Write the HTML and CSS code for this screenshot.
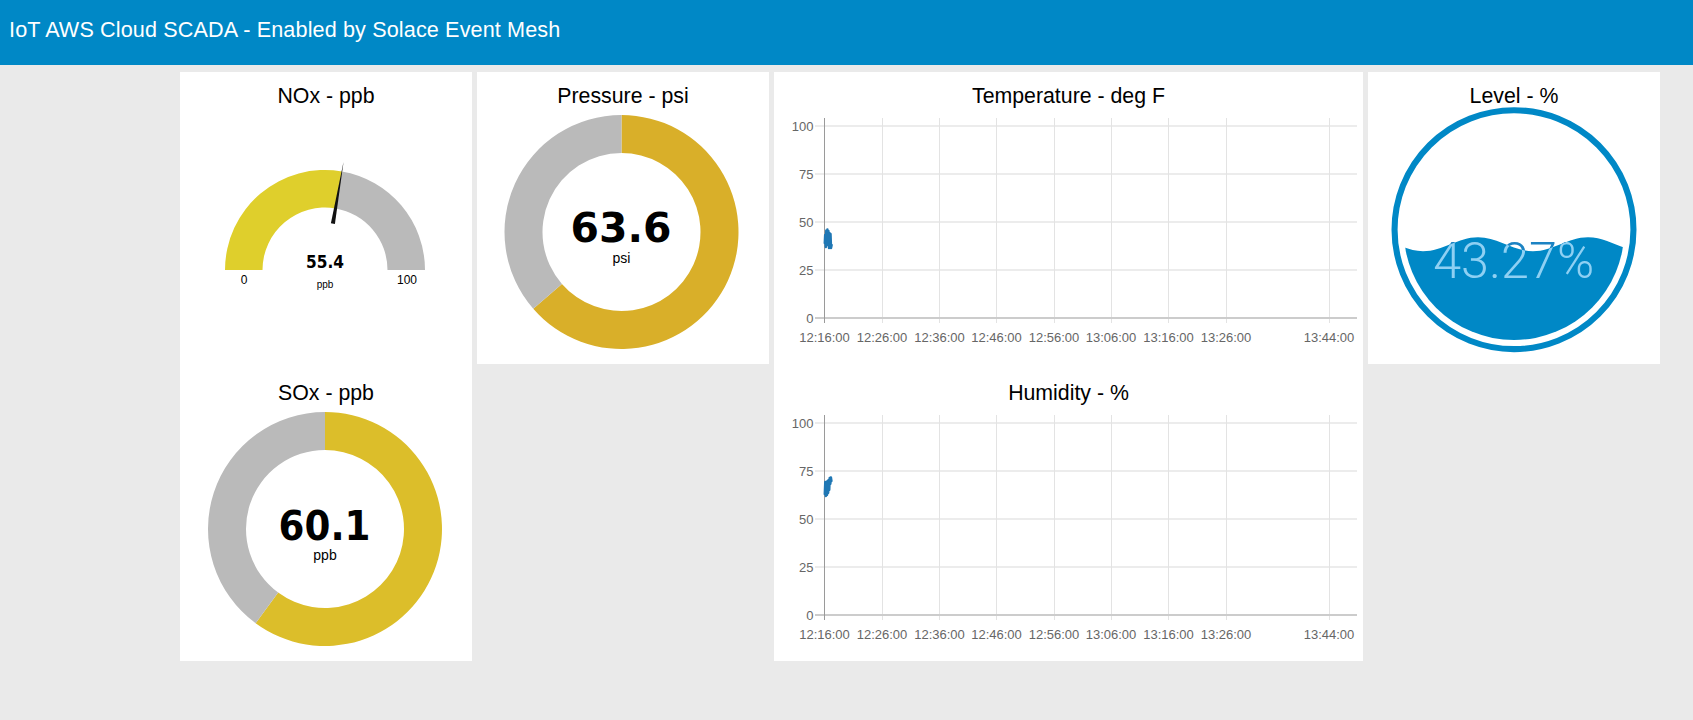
FILE: index.html
```html
<!DOCTYPE html>
<html lang="en">
<head>
<meta charset="utf-8">
<title>IoT AWS Cloud SCADA</title>
<link rel="stylesheet" href="styles.css">
</head>
<body>
<header class="topbar">IoT AWS Cloud SCADA - Enabled by Solace Event Mesh</header>
<main class="board">

  <section class="card card-tall">
    <div class="widget">
      <div class="widget-title">NOx - ppb</div>
      <svg class="widget-svg" width="292" height="255" viewBox="0 0 292 255">
        <path class="nox-fill" d="M45 161 A100 100 0 0 1 161.86 62.43 L155.54 99.39 A62.5 62.5 0 0 0 82.5 161 Z"/>
        <path class="rest" d="M161.86 62.43 A100 100 0 0 1 245 161 L207.5 161 A62.5 62.5 0 0 0 155.54 99.39 Z"/>
        <polygon class="needle" points="150.9,114.3 154.9,115.0 163.6,52.6"/>
        <text class="gauge-value" x="145" y="159" font-size="18" textLength="38" lengthAdjust="spacingAndGlyphs">55.4</text>
        <text class="gauge-unit-sm" x="145" y="179">ppb</text>
        <text class="gauge-minmax" x="64" y="175">0</text>
        <text class="gauge-minmax" x="227" y="175">100</text>
      </svg>
    </div>
    <div class="widget">
      <div class="widget-title">SOx - ppb</div>
      <svg class="widget-svg" width="292" height="255" viewBox="0 0 292 255">
        <path class="sox-fill" d="M145 6 A117 117 0 1 1 75.63 217.22 L98.16 186.62 A79 79 0 1 0 145 44 Z"/>
        <path class="rest" d="M75.63 217.22 A117 117 0 0 1 145 6 L145 44 A79 79 0 0 0 98.16 186.62 Z"/>
        <text class="gauge-value" x="144.5" y="134" font-size="41" textLength="92" lengthAdjust="spacingAndGlyphs">60.1</text>
        <text class="gauge-unit" x="145" y="154">ppb</text>
      </svg>
    </div>
  </section>

  <section class="card">
    <div class="widget">
      <div class="widget-title">Pressure - psi</div>
      <svg class="widget-svg" width="292" height="255" viewBox="0 0 292 255">
        <path class="psi-fill" d="M144.5 6 A117 117 0 1 1 56.26 199.83 L84.92 174.88 A79 79 0 1 0 144.5 44 Z"/>
        <path class="rest" d="M56.26 199.83 A117 117 0 0 1 144.5 6 L144.5 44 A79 79 0 0 0 84.92 174.88 Z"/>
        <text class="gauge-value" x="144" y="133" font-size="41" textLength="101" lengthAdjust="spacingAndGlyphs">63.6</text>
        <text class="gauge-unit" x="144.5" y="153.7">psi</text>
      </svg>
    </div>
  </section>

  <section class="card card-tall">
    <div class="widget">
      <div class="widget-title">Temperature - deg F</div>
      <svg class="widget-svg" width="589" height="255" viewBox="0 0 589 255">
        <g class="hgrid">
          <line x1="41" y1="17" x2="583" y2="17"/>
          <line x1="41" y1="65" x2="583" y2="65"/>
          <line x1="41" y1="113" x2="583" y2="113"/>
          <line x1="41" y1="161" x2="583" y2="161"/>
        </g>
        <g class="vgrid">
          <line x1="108.5" y1="9" x2="108.5" y2="214"/>
          <line x1="165.5" y1="9" x2="165.5" y2="214"/>
          <line x1="222.5" y1="9" x2="222.5" y2="214"/>
          <line x1="280.5" y1="9" x2="280.5" y2="214"/>
          <line x1="337.5" y1="9" x2="337.5" y2="214"/>
          <line x1="394.5" y1="9" x2="394.5" y2="214"/>
          <line x1="452.5" y1="9" x2="452.5" y2="214"/>
          <line x1="555.5" y1="9" x2="555.5" y2="214"/>
        </g>
        <line class="zero-line" x1="41" y1="209" x2="583" y2="209"/>
        <line class="y-axis" x1="50.5" y1="9" x2="50.5" y2="214"/>
        <g class="y-labels">
          <text x="39.5" y="21.5">100</text>
          <text x="39.5" y="69.5">75</text>
          <text x="39.5" y="117.5">50</text>
          <text x="39.5" y="165.5">25</text>
          <text x="39.5" y="213.5">0</text>
        </g>
        <g class="x-labels">
          <text x="50.5" y="232.5">12:16:00</text>
          <text x="108" y="232.5">12:26:00</text>
          <text x="165.5" y="232.5">12:36:00</text>
          <text x="222.5" y="232.5">12:46:00</text>
          <text x="280" y="232.5">12:56:00</text>
          <text x="337" y="232.5">13:06:00</text>
          <text x="394.5" y="232.5">13:16:00</text>
          <text x="452" y="232.5">13:26:00</text>
          <text x="555" y="232.5">13:44:00</text>
        </g>
        <polyline class="series" points="50.8,134 51.2,126 51.8,138 52.3,121.5 52.9,136 53.4,120.5 54,131 54.4,122 55,139 55.4,124 56,135 56.5,125 57,139 57.6,136"/>
      </svg>
    </div>
    <div class="widget">
      <div class="widget-title">Humidity - %</div>
      <svg class="widget-svg" width="589" height="255" viewBox="0 0 589 255">
        <g class="hgrid">
          <line x1="41" y1="17" x2="583" y2="17"/>
          <line x1="41" y1="65" x2="583" y2="65"/>
          <line x1="41" y1="113" x2="583" y2="113"/>
          <line x1="41" y1="161" x2="583" y2="161"/>
        </g>
        <g class="vgrid">
          <line x1="108.5" y1="9" x2="108.5" y2="214"/>
          <line x1="165.5" y1="9" x2="165.5" y2="214"/>
          <line x1="222.5" y1="9" x2="222.5" y2="214"/>
          <line x1="280.5" y1="9" x2="280.5" y2="214"/>
          <line x1="337.5" y1="9" x2="337.5" y2="214"/>
          <line x1="394.5" y1="9" x2="394.5" y2="214"/>
          <line x1="452.5" y1="9" x2="452.5" y2="214"/>
          <line x1="555.5" y1="9" x2="555.5" y2="214"/>
        </g>
        <line class="zero-line" x1="41" y1="209" x2="583" y2="209"/>
        <line class="y-axis" x1="50.5" y1="9" x2="50.5" y2="214"/>
        <g class="y-labels">
          <text x="39.5" y="21.5">100</text>
          <text x="39.5" y="69.5">75</text>
          <text x="39.5" y="117.5">50</text>
          <text x="39.5" y="165.5">25</text>
          <text x="39.5" y="213.5">0</text>
        </g>
        <g class="x-labels">
          <text x="50.5" y="232.5">12:16:00</text>
          <text x="108" y="232.5">12:26:00</text>
          <text x="165.5" y="232.5">12:36:00</text>
          <text x="222.5" y="232.5">12:46:00</text>
          <text x="280" y="232.5">12:56:00</text>
          <text x="337" y="232.5">13:06:00</text>
          <text x="394.5" y="232.5">13:16:00</text>
          <text x="452" y="232.5">13:26:00</text>
          <text x="555" y="232.5">13:44:00</text>
        </g>
        <polyline class="series" points="50.8,88 51.3,76 51.9,90 52.4,78 53,89 53.5,75 54.1,87 54.6,74 55.2,84 55.7,72 56.3,78 56.9,71.5 57.4,75"/>
      </svg>
    </div>
  </section>

  <section class="card">
    <div class="widget">
      <div class="widget-title">Level - %</div>
      <svg class="widget-svg" width="292" height="255" viewBox="0 0 292 255">
        <defs>
          <clipPath id="fillCircle"><circle cx="146" cy="120.7" r="110.3"/></clipPath>
          <clipPath id="waveArea"><path d="M0 128.2 C20.04 128.2 34.96 142.2 55 142.2 S89.96 128.2 110 128.2 S144.96 142.2 165 142.2 S199.96 128.2 220 128.2 S254.96 142.2 275 142.2 L275 240 L0 240 Z"/></clipPath>
        </defs>
        <circle class="level-ring" cx="146" cy="120.7" r="119.45"/>
        <text class="level-text" x="145.7" y="169.3" textLength="161" lengthAdjust="spacingAndGlyphs">43.27%</text>
        <g clip-path="url(#fillCircle)">
          <path class="level-wave" d="M0 128.2 C20.04 128.2 34.96 142.2 55 142.2 S89.96 128.2 110 128.2 S144.96 142.2 165 142.2 S199.96 128.2 220 128.2 S254.96 142.2 275 142.2 L275 240 L0 240 Z"/>
          <text class="level-text level-text-in" clip-path="url(#waveArea)" x="145.7" y="169.3" textLength="161" lengthAdjust="spacingAndGlyphs">43.27%</text>
        </g>
      </svg>
    </div>
  </section>

</main>
</body>
</html>
```

FILE: styles.css
```css
html, body {
  margin: 0;
  padding: 0;
}

body {
  background: #eaeaea;
  font-family: "Liberation Sans", Arial, sans-serif;
  color: #000;
  height: 720px;
  overflow: hidden;
}

.topbar {
  box-sizing: border-box;
  height: 65px;
  padding: 18px 0 0 9px;
  background: #0088c6;
  color: #ffffff;
  font-size: 21.6px;
  line-height: 24px;
  letter-spacing: 0.13px;
}

.board {
  display: grid;
  grid-template-columns: 292px 292px 589px 292px;
  grid-template-rows: 292px 292px;
  gap: 5px;
  padding: 7px 0 0 180px;
}

.card {
  background: #ffffff;
}

.card-tall {
  grid-row: span 2;
  display: flex;
  flex-direction: column;
  row-gap: 5px;
}

.widget {
  height: 292px;
  display: flex;
  flex-direction: column;
}

.widget-title {
  padding: 12px 0 1px;
  height: 24px;
  line-height: 24px;
  font-size: 21.3px;
  text-align: center;
  white-space: nowrap;
}

.widget-svg {
  display: block;
  overflow: visible;
}

/* gauges */
.nox-fill { fill: #dfcf2c; }
.sox-fill { fill: #dcbe2a; }
.psi-fill { fill: #d9af29; }
.rest { fill: #bababa; }
.needle { fill: #111111; }

.gauge-value {
  font-family: "DejaVu Sans", sans-serif;
  font-weight: bold;
  fill: #000;
  text-anchor: middle;
}

.gauge-unit {
  font-family: "Liberation Sans", Arial, sans-serif;
  font-size: 14px;
  fill: #000;
  text-anchor: middle;
}

.gauge-unit-sm {
  font-family: "Liberation Sans", Arial, sans-serif;
  font-size: 10px;
  fill: #000;
  text-anchor: middle;
}

.gauge-minmax {
  font-family: "Liberation Sans", Arial, sans-serif;
  font-size: 12px;
  fill: #000;
  text-anchor: middle;
}

/* charts */
.hgrid line {
  stroke: #ececec;
  stroke-width: 2;
}

.vgrid line {
  stroke: #e3e3e3;
  stroke-width: 1;
}

.zero-line {
  stroke: #cccccc;
  stroke-width: 2;
}

.y-axis {
  stroke: #9a9a9a;
  stroke-width: 1;
}

.y-labels text,
.x-labels text {
  font-family: "Liberation Sans", Arial, sans-serif;
  font-size: 13px;
  fill: #666666;
}

.y-labels text { text-anchor: end; }
.x-labels text { text-anchor: middle; }

.series {
  fill: none;
  stroke: #1f77b4;
  stroke-width: 2.5;
  stroke-linejoin: round;
  stroke-linecap: round;
}

/* level */
.level-ring {
  fill: none;
  stroke: #0088c6;
  stroke-width: 6.1;
}

.level-wave { fill: #0088c6; }

.level-text {
  font-family: Roboto, "Liberation Sans", sans-serif;
  font-weight: 300;
  font-size: 50px;
  fill: #1c83c3;
  text-anchor: middle;
}

.level-text-in { fill: #8ed0f3; }
```
